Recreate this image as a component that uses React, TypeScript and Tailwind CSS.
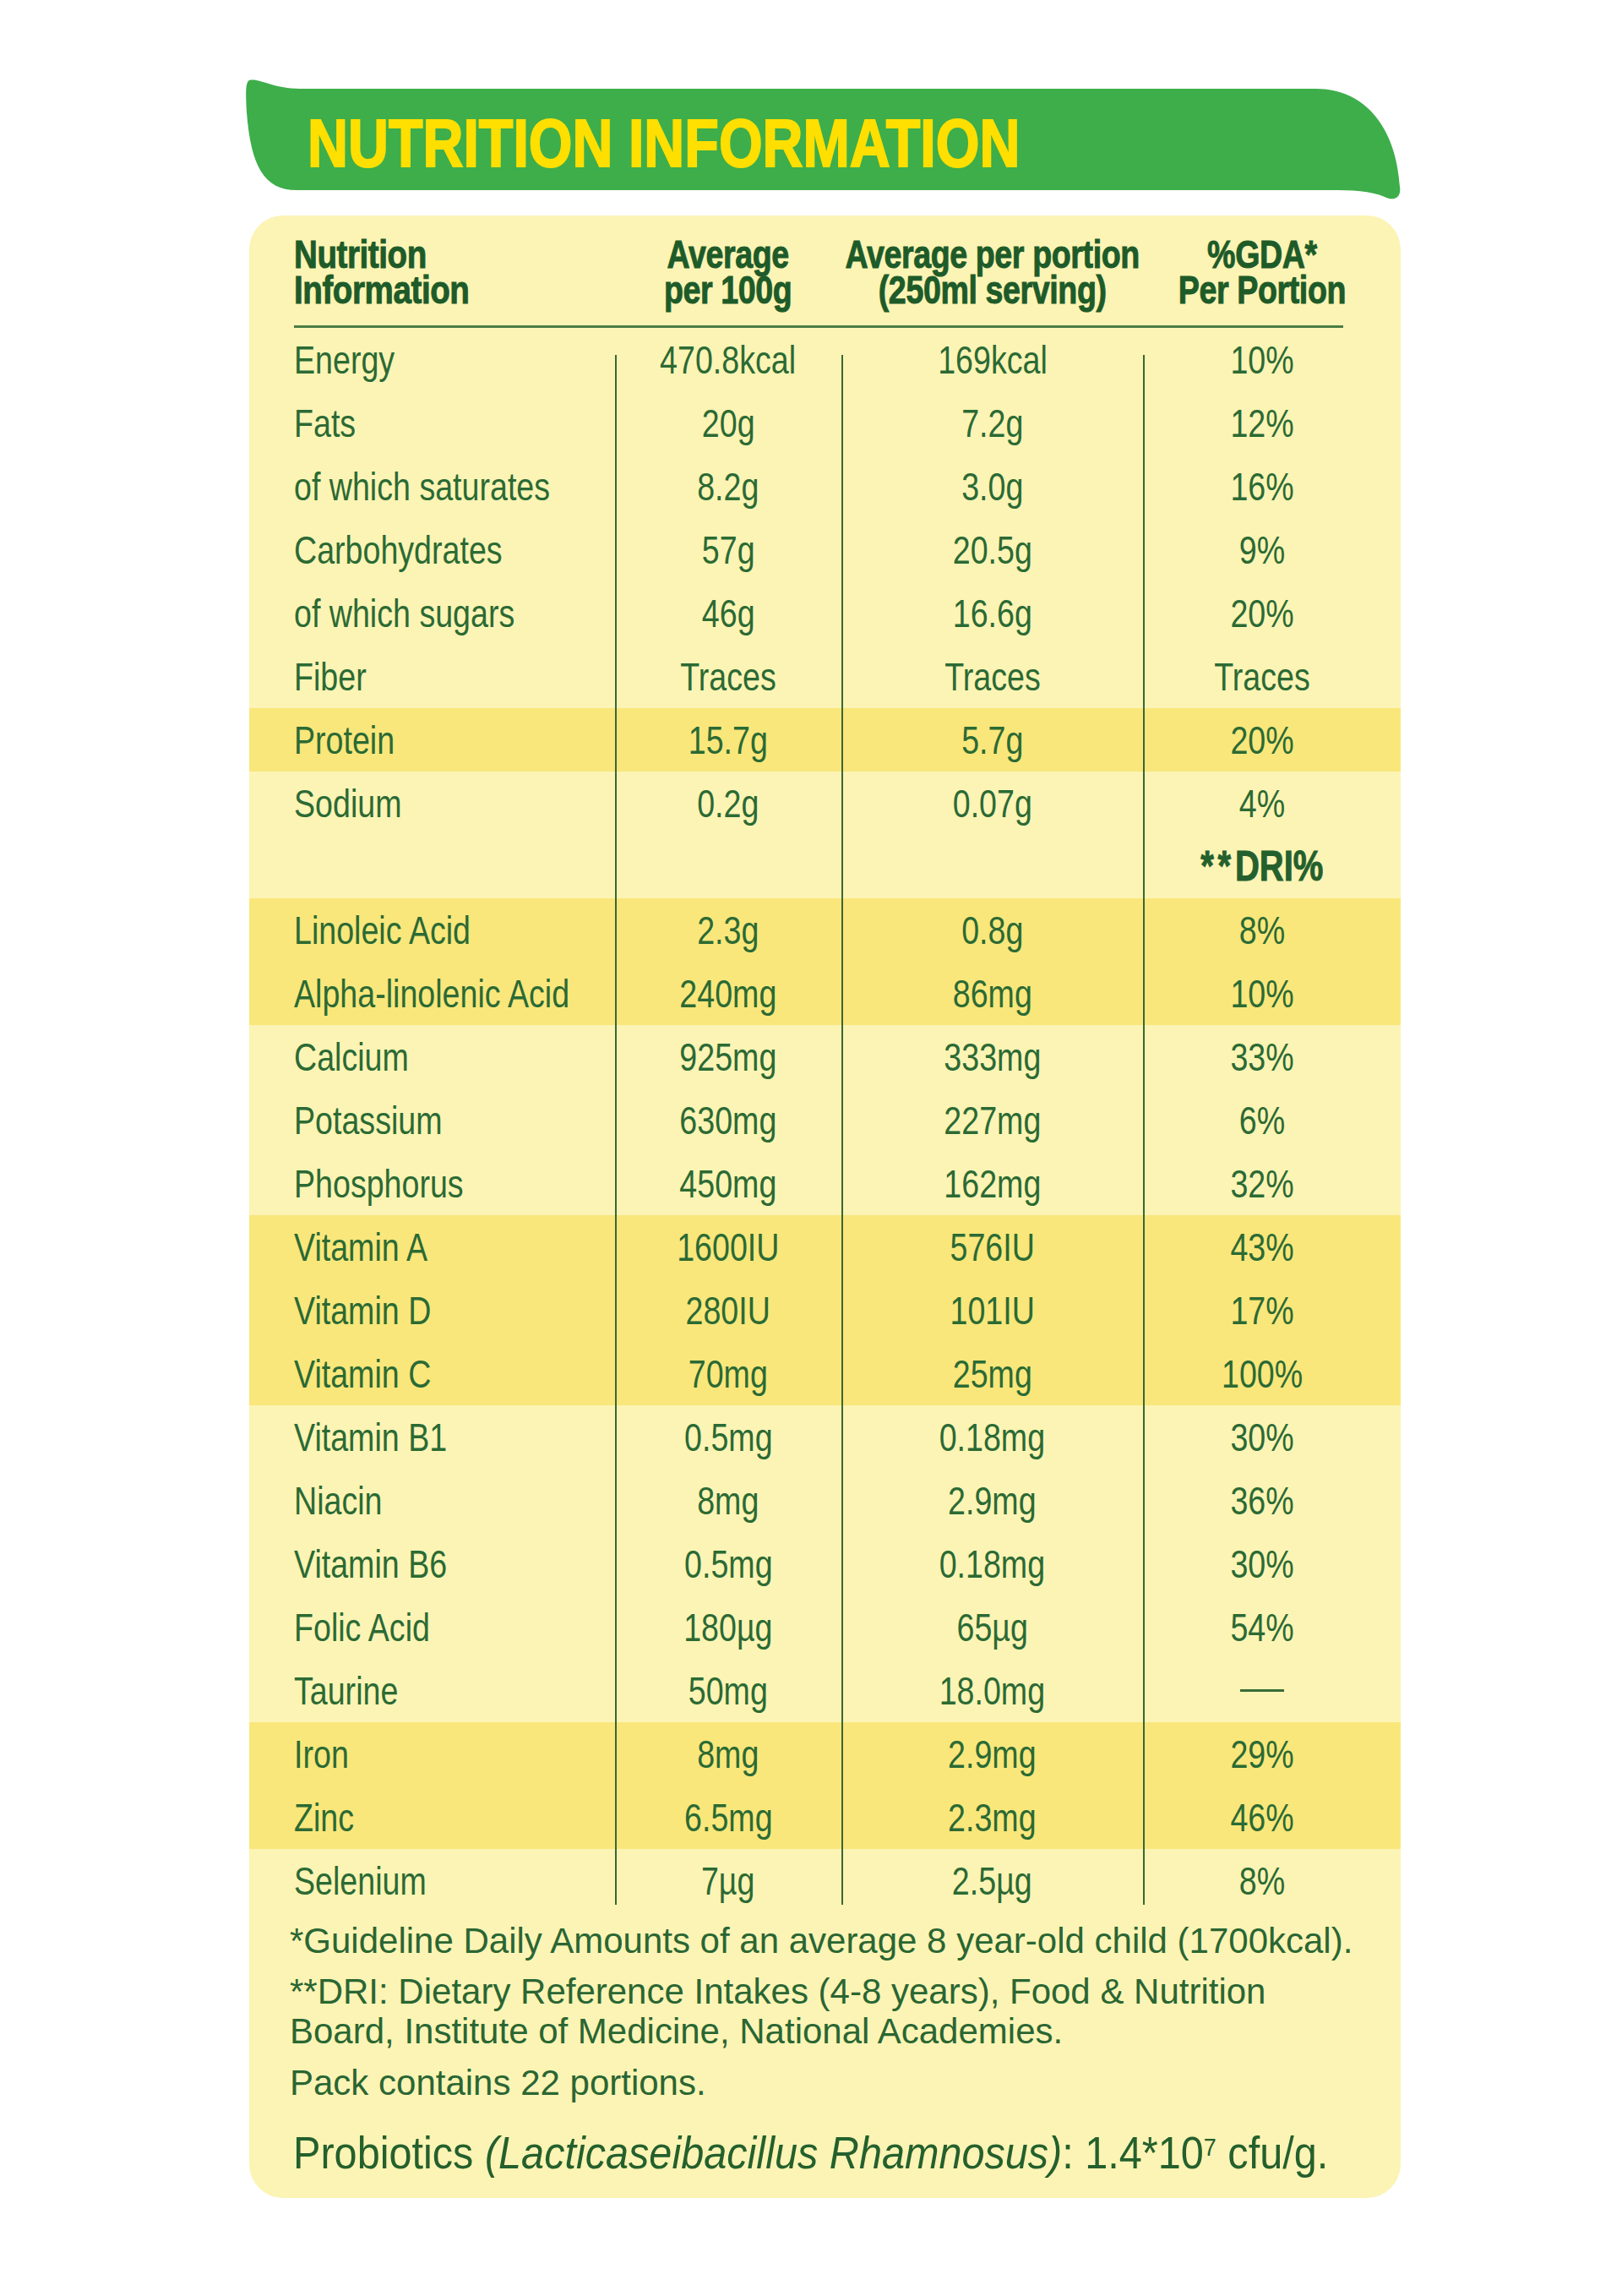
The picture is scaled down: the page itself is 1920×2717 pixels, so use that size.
import React from "react";

type Row = {
  label: string;
  per100: string;
  portion: string;
  gda: string;
  hl?: boolean;
};

const ROWS: Row[] = [
  { label: "Energy", per100: "470.8kcal", portion: "169kcal", gda: "10%" },
  { label: "Fats", per100: "20g", portion: "7.2g", gda: "12%" },
  { label: "of which saturates", per100: "8.2g", portion: "3.0g", gda: "16%" },
  { label: "Carbohydrates", per100: "57g", portion: "20.5g", gda: "9%" },
  { label: "of which sugars", per100: "46g", portion: "16.6g", gda: "20%" },
  { label: "Fiber", per100: "Traces", portion: "Traces", gda: "Traces" },
  { label: "Protein", per100: "15.7g", portion: "5.7g", gda: "20%", hl: true },
  { label: "Sodium", per100: "0.2g", portion: "0.07g", gda: "4%" },
  { label: "", per100: "", portion: "", gda: "DRI" },
  { label: "Linoleic Acid", per100: "2.3g", portion: "0.8g", gda: "8%", hl: true },
  { label: "Alpha-linolenic Acid", per100: "240mg", portion: "86mg", gda: "10%", hl: true },
  { label: "Calcium", per100: "925mg", portion: "333mg", gda: "33%" },
  { label: "Potassium", per100: "630mg", portion: "227mg", gda: "6%" },
  { label: "Phosphorus", per100: "450mg", portion: "162mg", gda: "32%" },
  { label: "Vitamin A", per100: "1600IU", portion: "576IU", gda: "43%", hl: true },
  { label: "Vitamin D", per100: "280IU", portion: "101IU", gda: "17%", hl: true },
  { label: "Vitamin C", per100: "70mg", portion: "25mg", gda: "100%", hl: true },
  { label: "Vitamin B1", per100: "0.5mg", portion: "0.18mg", gda: "30%" },
  { label: "Niacin", per100: "8mg", portion: "2.9mg", gda: "36%" },
  { label: "Vitamin B6", per100: "0.5mg", portion: "0.18mg", gda: "30%" },
  { label: "Folic Acid", per100: "180µg", portion: "65µg", gda: "54%" },
  { label: "Taurine", per100: "50mg", portion: "18.0mg", gda: "-" },
  { label: "Iron", per100: "8mg", portion: "2.9mg", gda: "29%", hl: true },
  { label: "Zinc", per100: "6.5mg", portion: "2.3mg", gda: "46%", hl: true },
  { label: "Selenium", per100: "7µg", portion: "2.5µg", gda: "8%" },
];

const SANS = "font-['Liberation_Sans',Arial,sans-serif]";

// condensed look: Liberation Sans squeezed horizontally
function Cond({ children, left }: { children: React.ReactNode; left?: boolean }) {
  return (
    <span className={`inline-block whitespace-nowrap scale-x-[0.8] ${left ? "origin-left" : "origin-center"}`}>
      {children}
    </span>
  );
}

function ValueCell({ value, first, last }: { value: React.ReactNode; first: boolean; last: boolean }) {
  // the column rules start half way into the first row and stop short of the last
  const rule = first
    ? "bg-[linear-gradient(#3a6636,#3a6636)] bg-no-repeat bg-[length:2px_43px] bg-[position:0_100%]"
    : last
      ? "bg-[linear-gradient(#3a6636,#3a6636)] bg-no-repeat bg-[length:2px_66px] bg-[position:0_0]"
      : "bg-[linear-gradient(#3a6636,#3a6636)] bg-no-repeat bg-[length:2px_100%] bg-[position:0_0]";
  return <div className={`flex items-center justify-center ${rule}`}>{value}</div>;
}

function Gda({ v }: { v: string }) {
  if (v === "DRI")
    return (
      <Cond>
        <span className="text-[50px] font-bold text-[#24602d] [-webkit-text-stroke:1px_#24602d]">
          <span className="tracking-[6px]">**</span>DRI%
        </span>
      </Cond>
    );
  if (v === "-") return <span className="block h-[3px] w-[52px] bg-[#3a6a38]" />;
  return <Cond>{v}</Cond>;
}

function HeadCell({ children }: { children: React.ReactNode }) {
  return (
    <div className="flex justify-center">
      <span className="inline-block whitespace-nowrap text-center scale-x-[0.8]">{children}</span>
    </div>
  );
}

export default function App() {
  return (
    <div className={`min-h-[2717px] bg-white pt-[93px] ${SANS}`}>
      <div className="relative ml-[289px] h-[146px] w-[1370px]">
        <svg className="absolute inset-0" width="1370" height="146" viewBox="0 0 1370 146">
          <path
            d="M6,2 C18,-1 34,12 66,12 L1268,12 C1330,12 1364,62 1368,128 C1370,140 1362,146 1350,140 C1330,131 1300,132 1270,132 L62,132 C24,132 8,104 3,40 C2,20 1,5 6,2 Z"
            fill="#3dae4a"
          />
        </svg>
        <h1 className="relative pl-[75px] pt-[37px] text-[80px] leading-none font-bold text-[#ffdf00] [-webkit-text-stroke:2px_#ffdf00]">
          <span className="inline-block whitespace-nowrap origin-left scale-x-[0.83]">NUTRITION INFORMATION</span>
        </h1>
      </div>

      <div className="ml-[295px] mt-[16px] w-[1363px] rounded-[40px] bg-[#fcf4b4] pt-[25px] pb-[21px] text-[#2b6a34]">
        <div className="grid grid-cols-[433px_268px_357px_282px] text-[47px] leading-[42px] font-bold tracking-[-0.5px] text-[#1d5b29] [-webkit-text-stroke:1px_#1d5b29]">
          <div className="pl-[53px]">
            <span className="inline-block whitespace-nowrap origin-left scale-x-[0.82]">
              Nutrition
              <br />
              Information
            </span>
          </div>
          <HeadCell>
            Average
            <br />
            per 100g
          </HeadCell>
          <HeadCell>
            Average per portion
            <br />
            (250ml serving)
          </HeadCell>
          <HeadCell>
            %GDA*
            <br />
            Per Portion
          </HeadCell>
        </div>
        <div className="mt-[21px] ml-[53px] mr-[68px] h-[3px] bg-[#4b7d45]" />

        <div className="text-[47px] leading-[75px]">
          {ROWS.map((r, i) => {
            const first = i === 0;
            const last = i === ROWS.length - 1;
            return (
              <div
                key={i}
                className={`grid h-[75px] grid-cols-[433px_268px_357px_282px] ${r.hl ? "bg-[#f9e77b]" : ""}`}
              >
                <div className="flex items-center pl-[53px]">
                  <Cond left>{r.label}</Cond>
                </div>
                <ValueCell value={<Cond>{r.per100}</Cond>} first={first} last={last} />
                <ValueCell value={<Cond>{r.portion}</Cond>} first={first} last={last} />
                <ValueCell value={<Gda v={r.gda} />} first={first} last={last} />
              </div>
            );
          })}
        </div>

        <div className="mt-[10px] pl-[48px] text-[42px] leading-[47px] text-[#2a6633]">
          <p>*Guideline Daily Amounts of an average 8 year-old child (1700kcal).</p>
          <p className="mt-[13px]">
            **DRI: Dietary Reference Intakes (4-8 years), Food &amp; Nutrition
            <br />
            Board, Institute of Medicine, National Academies.
          </p>
          <p className="mt-[14px]">Pack contains 22 portions.</p>
        </div>

        <p className="mt-[26px] pl-[52px] text-[54px] leading-[66px] text-[#24602d]">
          <span className="inline-block whitespace-nowrap origin-left scale-x-[0.9]">
            Probiotics <span className="italic">(Lacticaseibacillus Rhamnosus)</span>: 1.4*10
            <sup className="text-[30px]">7</sup> cfu/g.
          </span>
        </p>
      </div>
    </div>
  );
}
